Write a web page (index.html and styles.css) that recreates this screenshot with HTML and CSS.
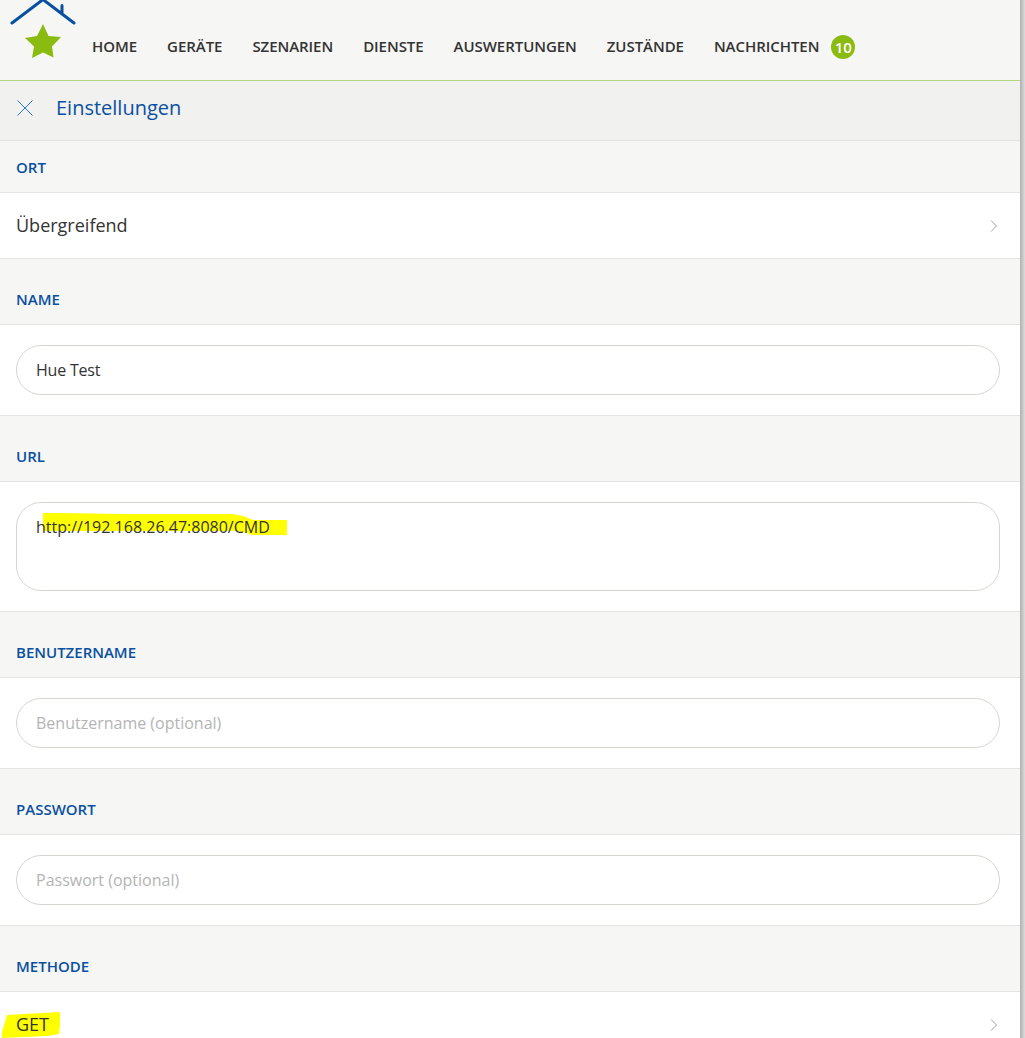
FILE: index.html
```html
<!DOCTYPE html>
<html lang="de">
<head>
<meta charset="utf-8">
<title>Einstellungen</title>
<link rel="stylesheet" href="styles.css">
</head>
<body>
<div class="page">
  <header class="topbar">
    <svg class="logo" width="66" height="60" viewBox="0 0 66 60">
      <path class="roof" d="M2 23 L33 -0.500 L64 23 M52 14 L52 5.500"/>
      <polygon class="star" points="33,24 38.500,36 51,37 42,46.500 43.500,57.500 33,52.500 22,58 24,46.500 15,38 27,36"/>
    </svg>
    <nav class="nav">
      <a>HOME</a><a>GERÄTE</a><a>SZENARIEN</a><a>DIENSTE</a><a>AUSWERTUNGEN</a><a>ZUSTÄNDE</a>
      <a class="nav-msg">NACHRICHTEN<span class="badge">10</span></a>
    </nav>
  </header>
  <div class="titlebar">
    <svg class="close" width="16" height="16" viewBox="0 0 16 16"><path d="M0.500 0.500 L15.500 15.500 M15.500 0.500 L0.500 15.500"/></svg>
    <span>Einstellungen</span>
  </div>
  <div class="label label-first">ORT</div>
  <div class="row-link"><span class="row-text">Übergreifend</span><svg class="chev" width="8" height="12" viewBox="0 0 8 12"><path d="M1 0.500 L6.500 6 L1 11.500"/></svg></div>
  <div class="label">NAME</div>
  <div class="field"><div class="input"><span class="value">Hue Test</span></div></div>
  <div class="label">URL</div>
  <div class="field"><div class="input textarea"><span class="hl-wrap"><span class="hl hl-url"></span><span class="hl-text">http://192.168.26.47:8080/CMD</span></span></div></div>
  <div class="label">BENUTZERNAME</div>
  <div class="field"><div class="input ph">Benutzername (optional)</div></div>
  <div class="label">PASSWORT</div>
  <div class="field"><div class="input ph">Passwort (optional)</div></div>
  <div class="label">METHODE</div>
  <div class="row-link row-last"><span class="row-text hl-wrap"><span class="hl hl-get"></span><span class="hl-text">GET</span></span><svg class="chev" width="8" height="12" viewBox="0 0 8 12"><path d="M1 0.500 L6.500 6 L1 11.500"/></svg></div>
</div>
<div class="edge"></div>
</body>
</html>
```
FILE: styles.css
```css
* { box-sizing: border-box; }
html, body { margin: 0; height: 100%; overflow: hidden; }
body { background: #fff; font-family: "Open Sans", sans-serif; color: #333; position: relative; }
.page { width: 1020px; }
.topbar { height: 81px; background: #f6f6f4; border-bottom: 1px solid #b5d67e; display: flex; padding-left: 10px; }
.logo { display: block; flex: none; overflow: visible; }
.roof { fill: none; stroke: #0a50a1; stroke-width: 3; stroke-linecap: round; stroke-linejoin: round; }
.star { fill: #8abb10; }
.nav { display: flex; align-items: center; gap: 30px; padding-left: 16px; padding-top: 13px; height: 79px; font-size: 15px; font-weight: 600; color: #333; white-space: nowrap; letter-spacing: -0.05px; }
.nav-msg { display: flex; align-items: center; }
.badge { width: 24px; height: 24px; border-radius: 50%; background: #8abb10; color: #fff; font-size: 15px; font-weight: 600; display: flex; align-items: center; justify-content: center; margin: 1px 0 0 12px; }
.titlebar { height: 60px; background: #f1f1f0; border-bottom: 1px solid #e4e4e2; display: flex; align-items: center; padding: 0 0 6px 17px; gap: 23px; color: #0a50a1; font-size: 20px; }
.close { flex: none; }
.close path { stroke: #2f74c4; stroke-width: 1; fill: none; }
.label { height: 66px; background: #f6f6f4; border-bottom: 1px solid #e4e4e2; padding: 0 16px 15px; display: flex; align-items: flex-end; font-size: 15px; font-weight: 600; color: #0a50a1; line-height: 20px; }
.label-first { height: 52px; }
.row-link { height: 66px; background: #fff; border-bottom: 1px solid #e4e4e2; display: flex; align-items: center; justify-content: space-between; padding: 0 22px 0 16px; font-size: 18px; color: #333; }
.row-text { margin-bottom: 2px; }
.row-last { border-bottom: 0; }
.field { background: #fff; padding: 20px 20px 20px 16px; border-bottom: 1px solid #e4e4e2; }
.input { height: 50px; border: 1px solid #d6d6d0; border-radius: 25px; padding: 0 19px; display: flex; align-items: center; font-size: 16px; color: #333; background: #fff; }
.value { letter-spacing: -0.2px; }
.textarea { height: 89px; align-items: flex-start; padding-top: 13px; line-height: 22px; }
.ph { color: #b4b4b4; }
.chev { flex: none; }
.chev path { fill: none; stroke: #a0a0a0; stroke-width: 1; }
.hl-wrap { position: relative; display: inline-block; }
.hl-text { position: relative; }
.hl { position: absolute; background: #ffff00; }
.hl-url { left: 7px; top: -3px; width: 244px; height: 22px; clip-path: polygon(0 0, 19px 0, 79px 1px, 190px 1px, 200px 3px, 210px 7px, 244px 7px, 244px 22px, 210px 22px, 195px 18px, 0 18px); }
.hl-get { left: -15px; top: 0; width: 59px; height: 26px; clip-path: polygon(6px 3px, 59px 0, 59px 14px, 58px 22px, 46px 24px, 1px 26px, 1px 20px, 3px 13px); }
.edge { position: absolute; top: 0; right: 0; bottom: 0; width: 5px; background: linear-gradient(to right, #b0b0b0, #dcdcdc); }
```
